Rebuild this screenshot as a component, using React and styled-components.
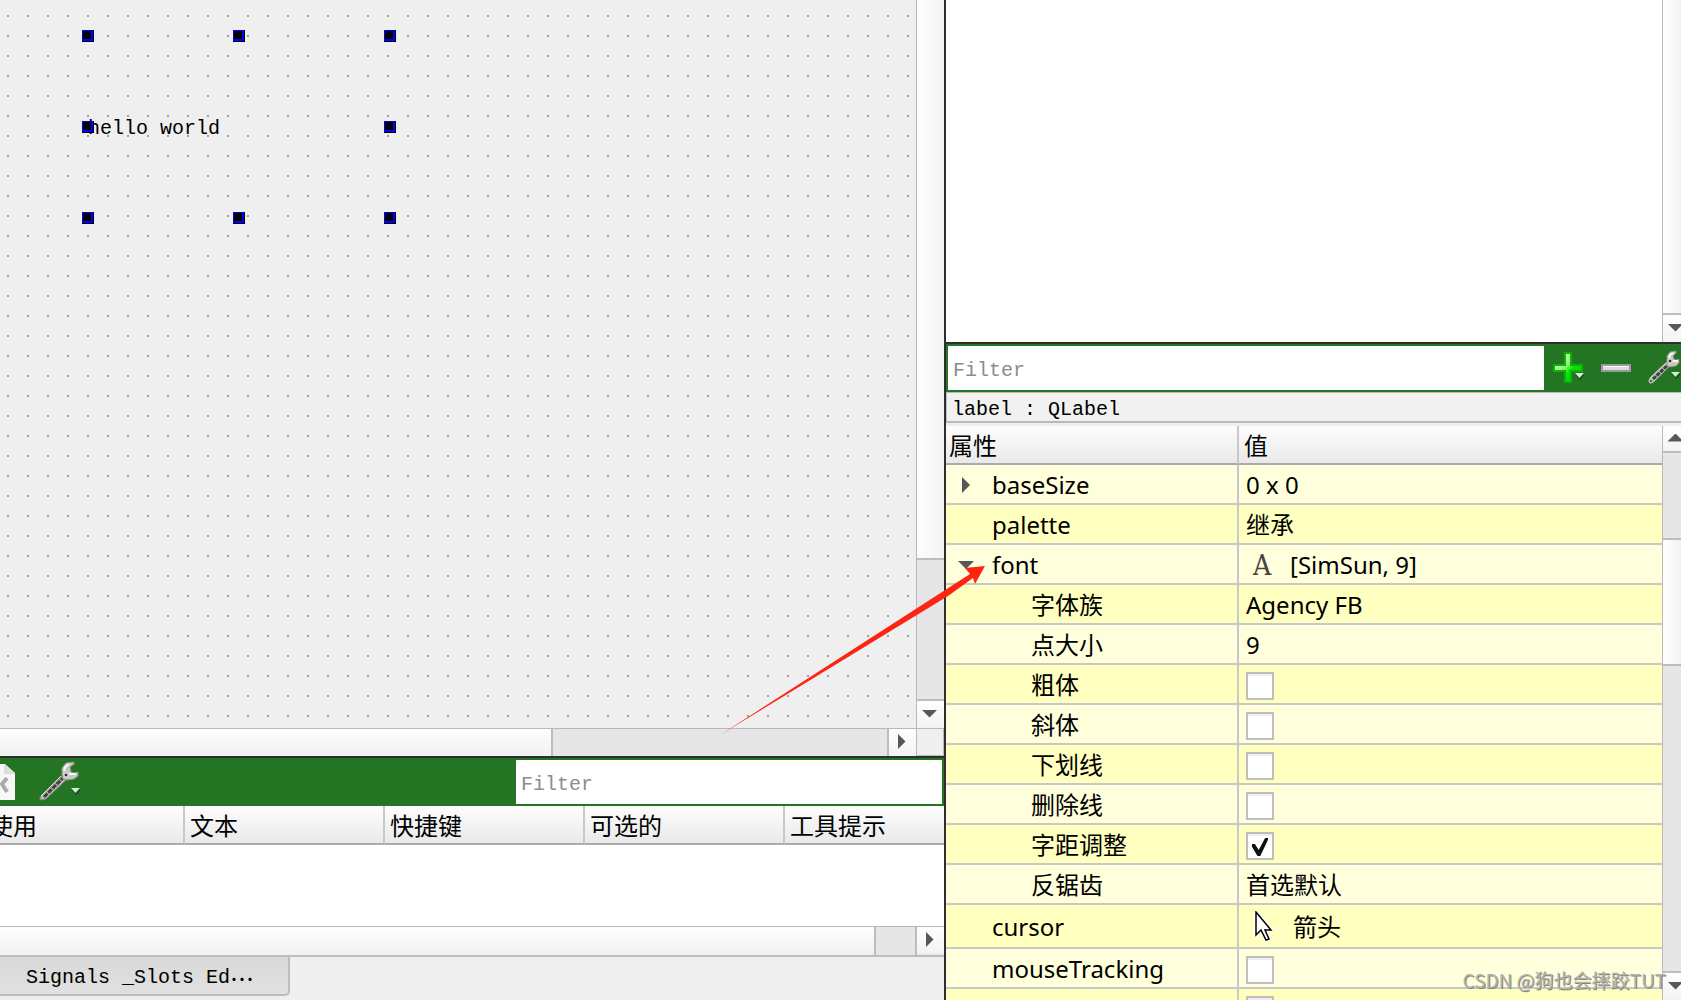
import React from "react";
import styled, { createGlobalStyle, css } from "styled-components";

const sans = `"Noto Sans", "Noto Sans CJK SC", sans-serif`;
const mono = `"Liberation Mono", "Noto Sans CJK SC", monospace`;
const green = "#237423";
const dark = "#2e2e2e";

const GlobalStyle = createGlobalStyle`
  * { box-sizing: border-box; }
  body { margin: 0; overflow: hidden; }
  button, input { font: inherit; margin: 0; padding: 0; border: 0; border-radius: 0; }
`;

const Window = styled.main`
  position: relative;
  display: grid;
  grid-template-columns: minmax(0, 1fr) 737px;
  height: 100vh;
  overflow: hidden;
  background: #efefef;
  color: #000;
  font: 24px/32px ${sans};
`;

const Column = styled.div`
  display: flex;
  flex-direction: column;
  min-width: 0;
  min-height: 0;
  border-left: ${(p) => (p.$divided ? `2px solid ${dark}` : "0")};
`;

/* ---------- scroll bars ---------- */

const Bar = styled.div`
  display: flex;
  flex: none;
  background: #e6e6e6;
  ${(p) =>
    p.$vertical
      ? css`
          flex-direction: column;
          width: ${p.$cut ? "19px" : "28px"};
          border-left: 1px solid #b9b9b9;
        `
      : css`
          height: ${p.$framed ? "31px" : "28px"};
          border-top: 1px solid #b9b9b9;
          border-bottom: ${p.$framed ? "2px solid #bdbdbd" : "0"};
        `}
`;

const Thumb = styled.div`
  flex: ${(p) => p.$grow} 1 0;
  background: ${(p) =>
    p.$vertical
      ? "linear-gradient(90deg, #fefefe, #f3f3f3)"
      : "linear-gradient(#fefefe, #f1f1f1)"};
  ${(p) =>
    p.$vertical
      ? css`border-bottom: 2px solid #bdbdbd;`
      : css`border-right: 2px solid #bdbdbd;`}
`;

const Track = styled.div`
  flex: ${(p) => p.$grow} 1 0;
  background: #e6e6e6;
  ${(p) =>
    p.$vertical
      ? css`border-bottom: 2px solid #bdbdbd;`
      : css`border-right: 2px solid #bdbdbd;`}
`;

const ScrollButton = styled.button`
  flex: none;
  display: flex;
  align-items: center;
  justify-content: center;
  width: 27px;
  height: 27px;
  padding: 0 2px 2px 0;
  overflow: hidden;
  background: linear-gradient(#fefefe, #f3f3f3);
  border-bottom: ${(p) => (p.$ruled ? "2px solid #bdbdbd" : "0")};
`;

const Corner = styled.div`
  flex: none;
  width: 28px;
  height: 28px;
  border: 1px solid #b9b9b9;
`;

const shapes = {
  down: ["16px", "8px", "polygon(0 0, 100% 0, 50% 100%)"],
  up: ["16px", "8px", "polygon(0 100%, 100% 100%, 50% 0)"],
  right: ["8px", "16px", "polygon(0 0, 100% 50%, 0 100%)"],
};

const Triangle = styled.span`
  flex: none;
  width: ${(p) => shapes[p.$to][0]};
  height: ${(p) => shapes[p.$to][1]};
  clip-path: ${(p) => shapes[p.$to][2]};
  background: #575757;
`;

/* ---------- form canvas ---------- */

const FormArea = styled.section`
  flex: 1;
  min-height: 0;
  display: flex;
  flex-direction: column;
`;

const Split = styled.div`
  flex: ${(p) => (p.$grow ? 1 : "none")};
  display: flex;
  min-height: 0;
`;

const Canvas = styled.div`
  position: relative;
  flex: 1;
  background: conic-gradient(at 2px 2px, transparent 75%, #a0a0a0 0) 7px 15px / 20px 20px;
`;

const Label = styled.div`
  position: absolute;
  left: 88px;
  top: 36px;
  width: 302px;
  height: 182px;
  padding-top: 4px;
  display: flex;
  align-items: center;
  font: 20px/24px ${mono};
`;

const Handle = styled.span`
  position: absolute;
  left: ${(p) => p.$x}%;
  top: ${(p) => p.$y}%;
  width: 12px;
  height: 12px;
  margin: -6px;
  background: #000;
  border: solid #000;
  border-width: 0 1px 1px 0;
  box-shadow: inset 1px 1px 0 #00f, inset -2px -2px 0 #00f;
`;

/* ---------- tool bars ---------- */

const ToolBar = styled.div`
  flex: none;
  display: flex;
  height: 50px;
  padding: 2px 0 2px ${(p) => (p.$flush ? "0" : "2px")};
  background: ${green};
  border-top: 2px solid ${dark};
`;

const FilterBox = styled.input`
  width: ${(p) => (p.$narrow ? "426px" : "auto")};
  flex: ${(p) => (p.$narrow ? "none" : 1)};
  min-width: 0;
  margin: 0 ${(p) => (p.$narrow ? "2px" : "0")} 0 0;
  padding: 5px 5px 0;
  background: #fff;
  outline: 0;
  font: 20px/24px ${mono};
  &::placeholder { color: #8c8c8c; opacity: 1; }
`;

const ToolButton = styled.button`
  flex: none;
  display: flex;
  align-items: center;
  width: ${(p) => p.$width}px;
  padding-left: ${(p) => p.$inset || 0}px;
  overflow: hidden;
  background: none;
`;

const Spacer = styled.div`
  flex: 1;
`;

const Icon = styled.svg`
  flex: none;
  display: block;
`;

/* ---------- action editor ---------- */

const ActionList = styled.div`
  flex: none;
  height: 120px;
  background: #fff;
`;

const ActionTable = styled.table`
  width: 100%;
  table-layout: fixed;
  border-spacing: 0;
`;

const HeadCell = styled.th`
  height: 39px;
  padding: 3px 0 0 ${(p) => p.$inset}px;
  text-align: left;
  font-weight: 400;
  white-space: nowrap;
  overflow: hidden;
  background: linear-gradient(#fdfdfd, #e9e9e9);
  border-bottom: 2px solid #ababab;
  border-right: ${(p) => (p.$last ? "0" : "2px solid #c8c8c8")};
  width: ${(p) => (p.$width ? `${p.$width}px` : "auto")};
`;

const Cropped = styled.span`
  display: block;
  margin-left: -11px;
`;

const TabStrip = styled.div`
  flex: none;
  height: 43px;
  padding-bottom: 4px;
  display: flex;
`;

const Tab = styled.button`
  display: flex;
  align-items: center;
  width: 290px;
  padding: 4px 0 0 26px;
  text-align: left;
  white-space: nowrap;
  font: 20px/24px ${mono};
  background: linear-gradient(#d9d9d9, #e0e0e0);
  border: solid #bdbdbd;
  border-width: 0 2px 2px 0;
  border-radius: 0 0 5px 0;
`;

const Ellipsis = styled.span`
  font: 24px/24px "Noto Sans CJK SC", sans-serif;
`;

/* ---------- property editor ---------- */

const ObjectTree = styled.div`
  flex: 1;
  min-height: 0;
  display: flex;
  background: #fff;
`;

const Blank = styled.div`
  flex: 1;
`;

const ObjectName = styled.div`
  flex: none;
  height: 31px;
  margin-bottom: 3px;
  padding: 5px 5px 0;
  font: 20px/24px ${mono};
  background: #f1f1f1;
  border: solid #b9b9b9;
  border-width: 1px 0 2px 1px;
`;

const Properties = styled.div`
  flex: none;
  height: 574px;
  display: flex;
  overflow: hidden;
`;

const TableFrame = styled.div`
  flex: 1;
  min-width: 0;
`;

const PropertyTable = styled.table`
  width: 100%;
  table-layout: fixed;
  border-spacing: 0;
`;

const Row = styled.tr`
  height: ${(p) => (p.$tall ? "44px" : "40px")};
  background: ${(p) => (p.$shade ? "#ffffbf" : "#ffffdc")};
`;

const NameCell = styled.th`
  position: relative;
  padding: 2px 0 0 ${(p) => (p.$child ? "85px" : "46px")};
  text-align: left;
  font-weight: 400;
  border-bottom: 2px solid #c8c8c8;
  border-right: 2px solid #c8c8c8;
`;

const ValueCell = styled.td`
  padding: 2px 0 0 7px;
  border-bottom: 2px solid #c8c8c8;
`;

const Value = styled.span`
  display: flex;
  align-items: center;
`;

const Expander = styled.button`
  position: absolute;
  left: 8px;
  top: 8px;
  width: 24px;
  height: 24px;
  display: flex;
  align-items: center;
  justify-content: center;
  background: none;
`;

const IconSlot = styled.span`
  flex: none;
  display: flex;
  justify-content: center;
  width: ${(p) => (p.$wide ? "47px" : "44px")};
  padding-right: 12px;
`;

const FontGlyph = styled.span`
  padding-top: 2px;
  font: 28px/30px "DejaVu Serif Condensed", "DejaVu Serif", serif;
  color: #45453c;
`;

const CheckBox = styled.input`
  appearance: none;
  display: block;
  width: 28px;
  height: 28px;
  margin-top: 2px;
  background: #fff;
  border: 2px solid #bfbfbf;
  box-shadow: inset 0 2px 0 #eee;
  &:checked::before {
    content: "";
    display: block;
    width: 16px;
    height: 18px;
    margin: 4px;
    background: #111;
    clip-path: polygon(0 34%, 18% 34%, 42% 66%, 82% 0, 100% 0, 100% 10%, 52% 100%, 34% 100%, 0 48%);
  }
`;

/* ---------- overlays ---------- */

const Pointer = styled.svg`
  position: absolute;
  right: 695px;
  bottom: 265px;
  pointer-events: none;
`;

const Watermark = styled.div`
  position: absolute;
  right: 15px;
  bottom: 6px;
  font: 19px/28px "Noto Sans CJK SC", sans-serif;
  color: #b4b4ac;
  text-shadow: 1px 1px 0 #85857d;
  pointer-events: none;
  white-space: nowrap;
`;

const MenuMark = ({ x, y }) => (
  <g>
    <path d={`M${x} ${y + 1}h10l-5 6z`} fill="#174f17" />
    <path d={`M${x} ${y}h9l-4.500 5z`} fill="#d5edd2" />
  </g>
);

const Wrench = () => (
  <Icon width="44" height="42" viewBox="0 0 44 42" aria-hidden="true">
    <path d="M2 36L25 14l4 4L8 38l-6 1z" fill="#b9bbb6" stroke="#7d837a" />
    <path d="M6 36L25 17" stroke="#3d403b" strokeWidth="3" strokeDasharray="5 1" />
    <path d="M3 35L23 15" stroke="#e6e6e2" strokeWidth="1" />
    <path
      d="M24 14V7l4-5 8-1v2l-4 3 1 5 3 1 4-1v4l-4 3-7 1-4-1z"
      fill="#c6c8c3"
      stroke="#8b9088"
    />
    <path d="M26 10l1-4 4-3M31 13l7 0" stroke="#f8f8f5" strokeWidth="2" fill="none" />
    <circle cx="28" cy="14" r="2" fill="#292929" stroke="#f0f0ee" />
    <MenuMark x={33} y={27} />
  </Icon>
);

const WrenchSmall = () => (
  <Icon width="34" height="36" viewBox="0 0 34 36" aria-hidden="true">
    <path d="M1 29L20 11l3 4L6 32l-4 1z" fill="#b9bbb6" stroke="#7d837a" />
    <path d="M5 29L21 14" stroke="#3d403b" strokeWidth="3" strokeDasharray="4 1" />
    <path d="M2 28L19 12" stroke="#e6e6e2" strokeWidth="1" />
    <path
      d="M19 11V6l3-4 6-1v2l-3 3 1 3 2 1 3-1v4l-3 3-6 1-3-1z"
      fill="#c6c8c3"
      stroke="#8b9088"
    />
    <path d="M21 8l1-3 3-2M25 11h5" stroke="#f8f8f5" strokeWidth="2" fill="none" />
    <circle cx="22" cy="11" r="2" fill="#292929" stroke="#f0f0ee" />
    <circle cx="3" cy="31" r="2" fill="#417741" stroke="#d8d8d4" />
    <MenuMark x={23} y={22} />
  </Icon>
);

const Plus = () => (
  <Icon width="34" height="34" viewBox="0 0 34 34" aria-hidden="true">
    <defs>
      <linearGradient id="plusFill" x1="0" y1="0" x2="1" y2="1">
        <stop offset="0.2" stopColor="#d4ffc6" />
        <stop offset="0.48" stopColor="#7fee62" />
        <stop offset="0.58" stopColor="#08e408" />
        <stop offset="1" stopColor="#00d000" />
      </linearGradient>
    </defs>
    <path
      d="M12 2h6v12h11v6H18v11h-6V20H1v-6h11z"
      fill="url(#plusFill)"
      stroke="#09b409"
      strokeWidth="2"
    />
    <MenuMark x={22} y={22} />
  </Icon>
);

const Minus = () => (
  <Icon width="30" height="34" viewBox="0 0 30 34" aria-hidden="true">
    <rect x="1" y="14" width="28" height="6" fill="#dcdcdc" stroke="#9a9a9a" strokeWidth="2" />
    <path d="M2 15.500h26" stroke="#f7f7f7" />
  </Icon>
);

const DeletePage = () => (
  <Icon width="15" height="36" viewBox="0 0 15 36" aria-hidden="true">
    <path d="M0 0h5l10 9v27H0z" fill="#f7f7f7" />
    <path d="M4 0v10h11z" fill="#dcdcdc" />
    <path d="M7 14l-5 6 5 8" fill="none" stroke="#aaa" strokeWidth="4" />
  </Icon>
);

const CursorArrow = () => (
  <Icon width="20" height="32" viewBox="0 0 20 32" aria-hidden="true">
    <path
      d="M2 1v23l5-5 5 10 3-1-4-9h6z"
      fill="#fff"
      stroke="#fff"
      strokeWidth="4"
      strokeLinejoin="round"
    />
    <path d="M2 1v23l5-5 5 10 3-1-4-9h6z" fill="#fff" stroke="#000" strokeWidth="1.500" />
  </Icon>
);

const handles = [
  [0, 0], [50, 0], [100, 0],
  [0, 50], [100, 50],
  [0, 100], [50, 100], [100, 100],
];

const properties = [
  { name: "baseSize", value: "0 x 0", expand: "right" },
  { name: "palette", value: "继承" },
  { name: "font", value: "[SimSun, 9]", expand: "down", icon: "font" },
  { name: "字体族", value: "Agency FB", child: true },
  { name: "点大小", value: "9", child: true },
  { name: "粗体", check: true, child: true },
  { name: "斜体", check: true, child: true },
  { name: "下划线", check: true, child: true },
  { name: "删除线", check: true, child: true },
  { name: "字距调整", check: true, checked: true, child: true },
  { name: "反锯齿", value: "首选默认", child: true },
  { name: "cursor", value: "箭头", icon: "cursor" },
  { name: "mouseTracking", check: true },
  { name: "tabletTracking", check: true },
];

function PropertyRow({ item, index }) {
  return (
    <Row $shade={index % 2 === 1} $tall={item.icon === "cursor"}>
      <NameCell scope="row" $child={item.child}>
        {item.expand && (
          <Expander aria-label={`Toggle ${item.name}`}>
            <Triangle $to={item.expand} />
          </Expander>
        )}
        {item.name}
      </NameCell>
      <ValueCell>
        {item.check ? (
          <CheckBox type="checkbox" aria-label={item.name} defaultChecked={item.checked} />
        ) : (
          <Value>
            {item.icon === "font" && (
              <IconSlot>
                <FontGlyph>A</FontGlyph>
              </IconSlot>
            )}
            {item.icon === "cursor" && (
              <IconSlot $wide>
                <CursorArrow />
              </IconSlot>
            )}
            {item.value}
          </Value>
        )}
      </ValueCell>
    </Row>
  );
}

export default function App() {
  return (
    <Window>
      <GlobalStyle />
      <Column>
        <FormArea>
          <Split $grow>
            <Canvas>
              <Label>
                hello world
                {handles.map(([x, y]) => (
                  <Handle key={`${x}-${y}`} $x={x} $y={y} />
                ))}
              </Label>
            </Canvas>
            <Bar $vertical>
              <Thumb $vertical $grow={561} />
              <Track $vertical $grow={140} />
              <ScrollButton aria-label="Scroll down">
                <Triangle $to="down" />
              </ScrollButton>
            </Bar>
          </Split>
          <Split>
            <Blank>
              <Bar>
                <Thumb $grow={553} />
                <Track $grow={336} />
                <ScrollButton aria-label="Scroll right">
                  <Triangle $to="right" />
                </ScrollButton>
              </Bar>
            </Blank>
            <Corner />
          </Split>
        </FormArea>

        <ToolBar $flush>
          <ToolButton $width={38} aria-label="Delete action">
            <DeletePage />
          </ToolButton>
          <ToolButton $width={48} aria-label="Configure actions">
            <Wrench />
          </ToolButton>
          <Spacer />
          <FilterBox $narrow placeholder="Filter" aria-label="Filter actions" />
        </ToolBar>
        <ActionList>
          <ActionTable>
            <thead>
              <tr>
                <HeadCell $inset={0} $width={185}>
                  <Cropped>使用</Cropped>
                </HeadCell>
                <HeadCell $inset={5} $width={200}>文本</HeadCell>
                <HeadCell $inset={5} $width={200}>快捷键</HeadCell>
                <HeadCell $inset={5} $width={200}>可选的</HeadCell>
                <HeadCell $inset={5} $last>工具提示</HeadCell>
              </tr>
            </thead>
          </ActionTable>
        </ActionList>
        <Bar $framed>
          <Thumb $grow={878} />
          <Track $grow={39} />
          <ScrollButton aria-label="Scroll actions right">
            <Triangle $to="right" />
          </ScrollButton>
        </Bar>
        <TabStrip>
          <Tab>
            Signals _Slots Ed<Ellipsis>…</Ellipsis>
          </Tab>
        </TabStrip>
      </Column>

      <Column $divided>
        <ObjectTree>
          <Blank />
          <Bar $vertical $cut>
            <Thumb $vertical $grow={1} />
            <ScrollButton aria-label="Scroll objects down">
              <Triangle $to="down" />
            </ScrollButton>
          </Bar>
        </ObjectTree>
        <ToolBar>
          <FilterBox placeholder="Filter" aria-label="Filter properties" />
          <ToolButton $width={48} $inset={9} aria-label="Add property">
            <Plus />
          </ToolButton>
          <ToolButton $width={48} $inset={9} aria-label="Remove property">
            <Minus />
          </ToolButton>
          <ToolButton $width={41} $inset={8} aria-label="Configure properties">
            <WrenchSmall />
          </ToolButton>
        </ToolBar>
        <ObjectName>label : QLabel</ObjectName>
        <Properties>
          <TableFrame>
            <PropertyTable>
              <thead>
                <tr>
                  <HeadCell $inset={3} $width={293}>属性</HeadCell>
                  <HeadCell $inset={5} $last>值</HeadCell>
                </tr>
              </thead>
              <tbody>
                {properties.map((item, index) => (
                  <PropertyRow key={item.name} item={item} index={index} />
                ))}
              </tbody>
            </PropertyTable>
          </TableFrame>
          <Bar $vertical $cut>
            <ScrollButton $ruled aria-label="Scroll properties up">
              <Triangle $to="up" />
            </ScrollButton>
            <Track $vertical $grow={86} />
            <Thumb $vertical $grow={126} />
            <Track $vertical $grow={310} />
            <ScrollButton aria-label="Scroll properties down">
              <Triangle $to="down" />
            </ScrollButton>
          </Bar>
        </Properties>
      </Column>

      <Pointer width="266" height="170" viewBox="0 0 266 170" aria-hidden="true">
        <path d="M0 170L250 9l-5-6 20-2-10 18-2-6L228 31z" fill="#fe2414" />
      </Pointer>
      <Watermark>CSDN @狗也会摔跤TUT</Watermark>
    </Window>
  );
}
